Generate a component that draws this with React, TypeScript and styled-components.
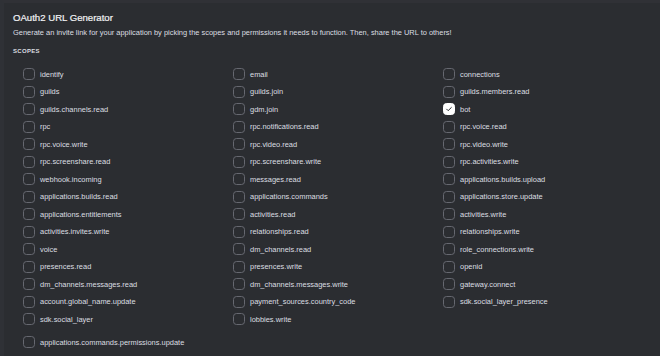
import React from 'react';
import styled, { createGlobalStyle } from 'styled-components';

const GlobalStyle = createGlobalStyle`
  html, body {
    margin: 0;
    padding: 0;
    background: #2b2d31;
  }
  body {
    font-family: "Liberation Sans", Arial, sans-serif;
    color: #dbdee1;
  }
`;

const Page = styled.div`
  width: 660px;
  height: 356px;
  box-sizing: border-box;
  background: #2b2d31;
  border-top: 3px solid #303136;
  border-left: 4px solid #2f3136;
  padding: 9px 0 0 9px;
  overflow: hidden;
`;

const Title = styled.h2`
  margin: 0;
  font-size: 9.6px;
  font-weight: 400;
  -webkit-text-stroke: 0.2px #f2f3f5;
  color: #f2f3f5;
  line-height: 12px;
`;

const Description = styled.p`
  margin: 4px 0 0;
  font-size: 7.45px;
  line-height: 10px;
  color: #dbdee1;
`;

const SectionLabel = styled.h3`
  margin: 9px 0 0;
  font-size: 6px;
  font-weight: 700;
  letter-spacing: 0.3px;
  text-transform: uppercase;
  color: #dbdee1;
  line-height: 8px;
`;

const Grid = styled.div`
  display: grid;
  grid-template-columns: repeat(3, 210px);
  row-gap: 5.5px;
  margin-top: 13px;
  padding-left: 10px;
`;

const Extra = styled.div`
  margin-top: 11px;
  padding-left: 10px;
`;

const Item = styled.label`
  display: flex;
  align-items: center;
  gap: 5px;
  height: 12px;
  font-size: 7.45px;
  color: #dbdee1;
  white-space: nowrap;
`;

const Box = styled.span<{ $checked?: boolean }>`
  flex: none;
  width: 12px;
  height: 12px;
  box-sizing: border-box;
  border-radius: 3.5px;
  border: 1px solid ${(p) => (p.$checked ? '#ffffff' : '#666870')};
  background: ${(p) => (p.$checked ? '#ffffff' : 'transparent')};
  display: flex;
  align-items: center;
  justify-content: center;
`;

const col1 = [
  'identify', 'guilds', 'guilds.channels.read', 'rpc', 'rpc.voice.write',
  'rpc.screenshare.read', 'webhook.incoming', 'applications.builds.read',
  'applications.entitlements', 'activities.invites.write', 'voice', 'presences.read',
  'dm_channels.messages.read', 'account.global_name.update', 'sdk.social_layer',
];
const col2 = [
  'email', 'guilds.join', 'gdm.join', 'rpc.notifications.read', 'rpc.video.read',
  'rpc.screenshare.write', 'messages.read', 'applications.commands', 'activities.read',
  'relationships.read', 'dm_channels.read', 'presences.write',
  'dm_channels.messages.write', 'payment_sources.country_code', 'lobbies.write',
];
const col3 = [
  'connections', 'guilds.members.read', 'bot', 'rpc.voice.read', 'rpc.video.write',
  'rpc.activities.write', 'applications.builds.upload', 'applications.store.update',
  'activities.write', 'relationships.write', 'role_connections.write', 'openid',
  'gateway.connect', 'sdk.social_layer_presence',
];

const scopes: string[] = [];
for (let i = 0; i < col1.length; i++) {
  scopes.push(col1[i]);
  scopes.push(col2[i]);
  if (col3[i]) scopes.push(col3[i]);
}

const Check = () => (
  <svg width="8" height="8" viewBox="0 0 24 24" fill="none">
    <path d="M5 12.5l4.5 4.5L19 7.5" stroke="#2b2d31" strokeWidth="3" strokeLinecap="round" strokeLinejoin="round" />
  </svg>
);

const Scope: React.FC<{ name: string }> = ({ name }) => {
  const checked = name === 'bot';
  return (
    <Item>
      <Box $checked={checked}>{checked && <Check />}</Box>
      {name}
    </Item>
  );
};

export default function App() {
  return (
    <>
      <GlobalStyle />
      <Page>
        <Title>OAuth2 URL Generator</Title>
        <Description>
          Generate an invite link for your application by picking the scopes and permissions it needs to function. Then, share the URL to others!
        </Description>
        <SectionLabel>Scopes</SectionLabel>
        <Grid>
          {scopes.map((s) => (
            <Scope key={s} name={s} />
          ))}
        </Grid>
        <Extra>
          <Scope name="applications.commands.permissions.update" />
        </Extra>
      </Page>
    </>
  );
}
